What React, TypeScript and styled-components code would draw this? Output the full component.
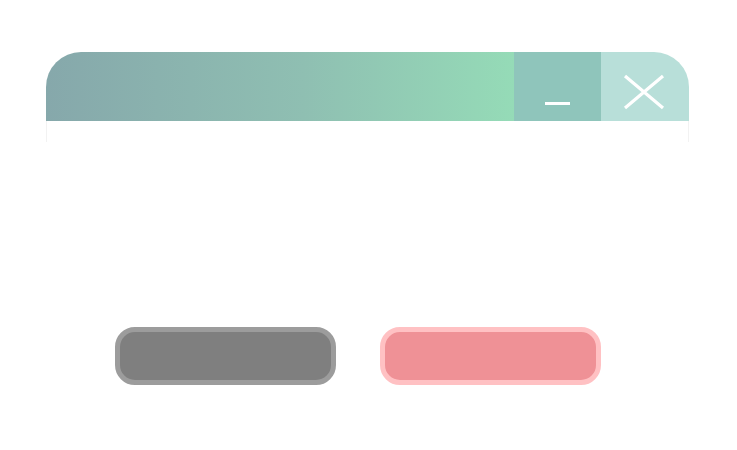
import React from 'react';
import styled, {createGlobalStyle} from 'styled-components';

const GlobalStyle = createGlobalStyle`
  html, body {
    margin: 0;
    padding: 0;
    background: #ffffff;
    font-family: "Liberation Sans", Arial, sans-serif;
  }
`

const Page = styled.div`
  width: 737px;
  height: 450px;
  box-sizing: border-box;
  padding: 52px 48px 0 46px;
  display: flex;
  flex-direction: column;
`

const Window = styled.div`
  width: 643px;
  display: flex;
  flex-direction: column;
`

const TitleBar = styled.div`
  height: 69px;
  display: flex;
  border-radius: 35px 35px 0 0;
  overflow: hidden;
`

const Title = styled.div`
  flex: 1;
  background: linear-gradient(90deg, #86a8ab 0%, #8fbfb2 55%, #95dbb7 100%);
`

const ControlButton = styled.button<{$bg: string; $w: number}>`
  width: ${p => p.$w}px;
  height: 100%;
  border: none;
  padding: 0;
  margin: 0;
  background: ${p => p.$bg};
  display: flex;
  align-items: center;
  justify-content: center;
  cursor: pointer;
`

const WindowBody = styled.div`
  height: 21px;
  border-left: 1px solid #f2f2f2;
  border-right: 1px solid #f2f2f2;
`

const Actions = styled.div`
  display: flex;
  gap: 44px;
  margin-top: 185px;
  padding-left: 69px;
`

const ActionButton = styled.button<{$fill: string; $ring: string}>`
  width: 221px;
  height: 58px;
  box-sizing: border-box;
  border: 5px solid ${p => p.$ring};
  border-radius: 20px;
  background: ${p => p.$fill};
  cursor: pointer;
`

const App: React.FC = () => {
  return (
    <>
      <GlobalStyle />
      <Page>
        <Window>
          <TitleBar>
            <Title />
            <ControlButton $bg="#8fc5bb" $w={87} aria-label="minimize">
              <svg width="87" height="69" viewBox="0 0 87 69">
                <rect x="31" y="50" width="25" height="3" fill="#ffffff" />
              </svg>
            </ControlButton>
            <ControlButton $bg="#b8dfd9" $w={88} aria-label="close">
              <svg width="88" height="69" viewBox="0 0 88 69">
                <path d="M24 24 L62 56 M62 24 L24 56" stroke="#ffffff" strokeWidth="3.2" />
              </svg>
            </ControlButton>
          </TitleBar>
          <WindowBody />
        </Window>
        <Actions>
          <ActionButton $fill="#7f7f7f" $ring="#9c9c9c" />
          <ActionButton $fill="#ef9196" $ring="#ffc1c3" />
        </Actions>
      </Page>
    </>
  );
}

export default App;
